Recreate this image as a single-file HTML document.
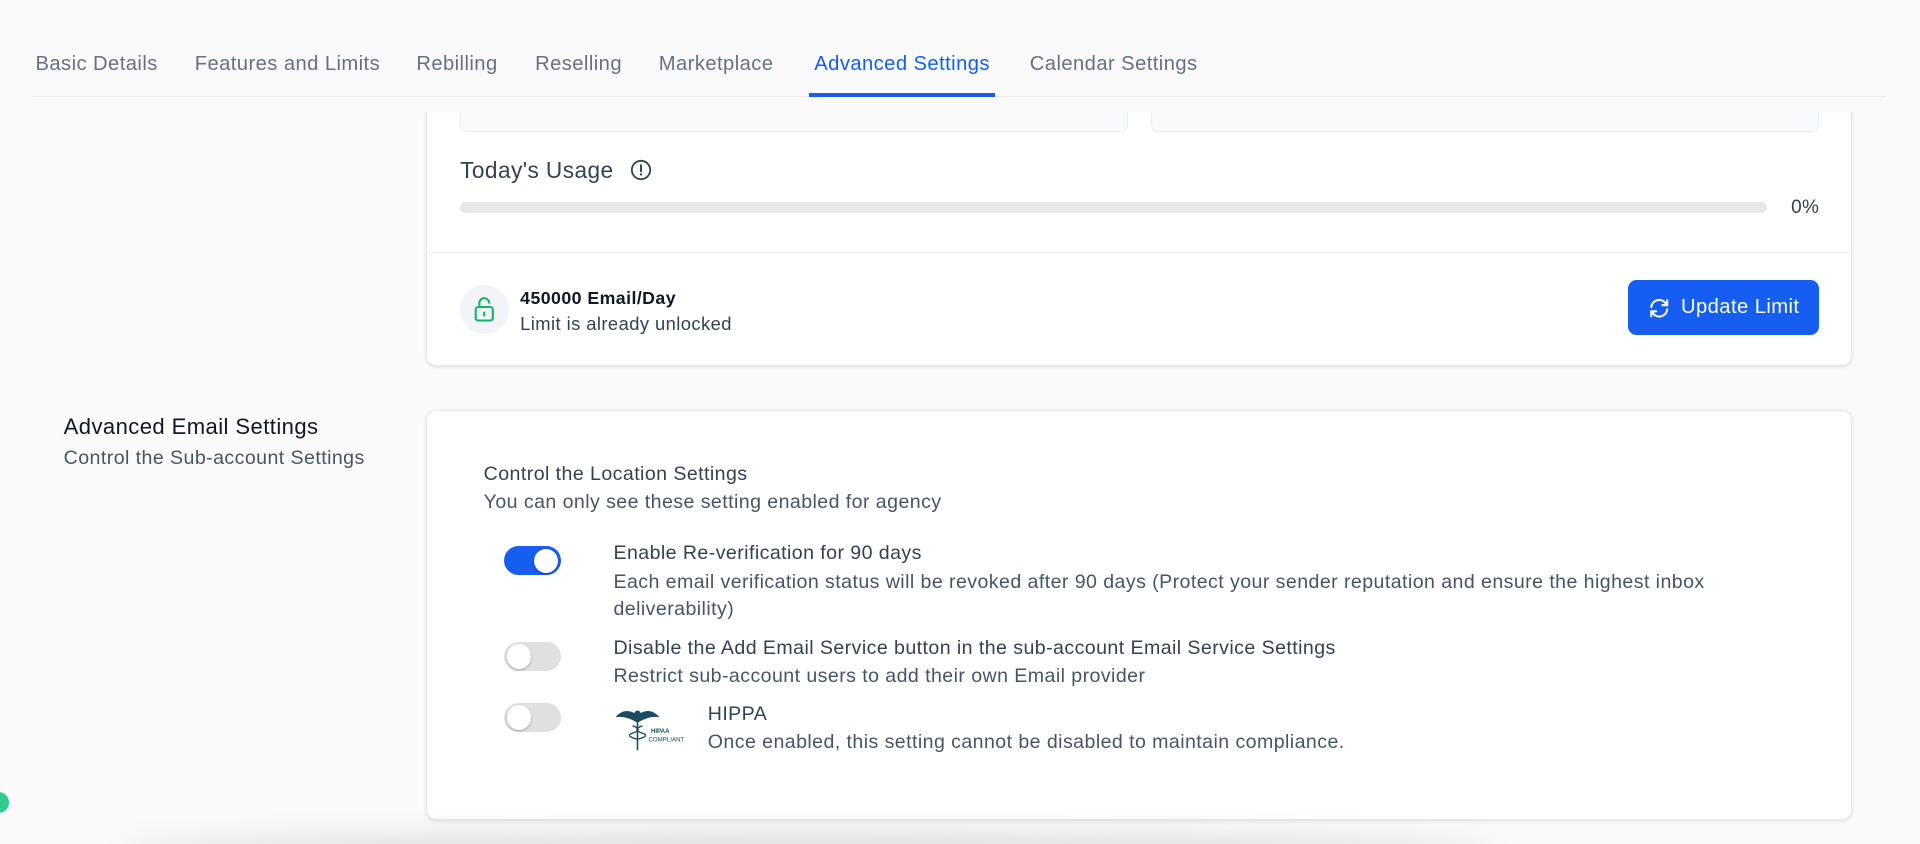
<!DOCTYPE html>
<html><head><meta charset="utf-8"><style>
html,body{margin:0;padding:0;width:1920px;height:844px;overflow:hidden;background:#fafafb;font-family:"Liberation Sans",Arial,sans-serif;}
#w{position:relative;width:1568px;height:689px;zoom:1.2244898;color:#344054;letter-spacing:.35px;}
.a{position:absolute;white-space:nowrap;}
.tab{top:43px;font-size:16.5px;color:#667085;}
.card{position:absolute;background:#fff;border:1px solid #e4e7ec;border-radius:8px;box-shadow:0 1px 3px rgba(16,24,40,.1);}
.tg{position:absolute;left:412px;width:46px;height:24px;border-radius:12px;background:#e0e0e0;}
.tg::after{content:"";position:absolute;top:2px;left:2px;width:20px;height:20px;border-radius:50%;background:#fff;box-shadow:0 1px 2px rgba(0,0,0,.25);}
.tg.on{background:#155eef;}
.tg.on::after{left:24px;}
.t{font-size:16px;color:#344054;font-weight:500;}
.d{font-size:16px;color:#475467;}
</style></head><body><div id="w">
<div class="a tab" style="left:29px">Basic Details</div>
<div class="a tab" style="left:159px">Features and Limits</div>
<div class="a tab" style="left:340px">Rebilling</div>
<div class="a tab" style="left:437px">Reselling</div>
<div class="a tab" style="left:538px">Marketplace</div>
<div class="a tab" style="left:665px;color:#155eef">Advanced Settings</div>
<div class="a tab" style="left:841px">Calendar Settings</div>
<div class="a" style="left:25px;top:78px;width:1515px;height:1px;background:#eaecf0"></div>
<div class="a" style="left:661px;top:76px;width:152px;height:3px;background:#155eef"></div>

<div class="card" style="left:348px;top:60px;width:1163px;height:237px;clip-path:inset(32px -10px -10px -10px)">
  <div style="position:absolute;left:27px;top:0;width:544px;height:45px;background:#f9fafb;border:1px solid #eaecf0;border-radius:6px"></div>
  <div style="position:absolute;left:591px;top:0;width:544px;height:45px;background:#f9fafb;border:1px solid #eaecf0;border-radius:6px"></div>
  <div class="a" style="left:27px;top:67px;font-size:18.5px;color:#344054">Today's Usage</div>
  <svg class="a" style="left:166px;top:69px" width="18" height="18" viewBox="0 0 18 18"><circle cx="9" cy="9" r="7.5" fill="none" stroke="#344054" stroke-width="1.5"/><path d="M9 5v5" stroke="#344054" stroke-width="1.6" stroke-linecap="round"/><circle cx="9" cy="12.6" r="1" fill="#344054"/></svg>
  <div class="a" style="left:27px;top:104px;width:1067px;height:9px;border-radius:5px;background:#e8e8e8"></div>
  <div class="a" style="right:26px;top:100px;font-size:15.5px;color:#344054">0%</div>
  <div class="a" style="left:0;top:145px;width:1163px;height:1px;background:#eaecf0"></div>
  <div class="a" style="left:27px;top:172px;width:40px;height:40px;border-radius:50%;background:#f2f4f7"></div>
  <svg class="a" style="left:37px;top:181px" width="20" height="22" viewBox="0 0 20 22"><rect x="3" y="9" width="14" height="11" rx="2" fill="none" stroke="#17b26a" stroke-width="1.7"/><path d="M6 9V6a4 4 0 0 1 8-0.5" fill="none" stroke="#17b26a" stroke-width="1.7" stroke-linecap="round"/><path d="M10 13.5v2.5" stroke="#17b26a" stroke-width="1.7" stroke-linecap="round"/></svg>
  <div class="a" style="left:76px;top:174px;font-size:14.5px;font-weight:bold;color:#101828">450000 Email/Day</div>
  <div class="a" style="left:76px;top:195px;font-size:15px;color:#344054">Limit is already unlocked</div>
  <div class="a" style="left:981px;top:168px;width:156px;height:45px;border-radius:7px;background:#155eef"></div>
  <svg class="a" style="left:996px;top:181px" width="20" height="20" viewBox="0 0 20 20" fill="none" stroke="#fff" stroke-width="1.7" stroke-linecap="round" stroke-linejoin="round"><path d="M3.5 9a6.5 6.5 0 0 1 11.6-3.2L16.5 7.5"/><path d="M16.5 3.5v4h-4"/><path d="M16.5 11a6.5 6.5 0 0 1-11.6 3.2L3.5 12.5"/><path d="M3.5 16.5v-4h4"/></svg>
  <div class="a" style="left:1024px;top:181px;font-size:16.5px;color:#fff">Update Limit</div>
</div>

<div class="a" style="left:52px;top:338px;font-size:18px;color:#101828">Advanced Email Settings</div>
<div class="a" style="left:52px;top:365px;font-size:16px;color:#475467">Control the Sub-account Settings</div>

<div class="card" style="left:348px;top:335px;width:1163px;height:333px"></div>
<div class="a t" style="left:395px;top:378px">Control the Location Settings</div>
<div class="a d" style="left:395px;top:401px">You can only see these setting enabled for agency</div>

<div class="tg on" style="top:446px"></div>
<div class="a t" style="left:501px;top:443px">Enable Re-verification for 90 days</div>
<div class="a d" style="left:501px;top:465px;line-height:22px;white-space:normal;width:930px">Each email verification status will be revoked after 90 days (Protect your sender reputation and ensure the highest inbox deliverability)</div>

<div class="tg" style="top:524px"></div>
<div class="a t" style="left:501px;top:520px">Disable the Add Email Service button in the sub-account Email Service Settings</div>
<div class="a d" style="left:501px;top:543px">Restrict sub-account users to add their own Email provider</div>

<div class="tg" style="top:574px"></div>
<svg class="a" style="left:501px;top:576px" width="70" height="38" viewBox="0 0 70 38"><path d="M2 10 C8 3 14 4 20 8 C26 4 32 3 38 10 C32 9 26 11 21 14 L19 14 C14 11 8 9 2 10Z" fill="#1d4a63"/><circle cx="20" cy="7" r="2.5" fill="#1d4a63"/><path d="M20 9V37" stroke="#1d4a63" stroke-width="1.3"/><path d="M16 17c6 2 6 4 0 6s-0 4 4 5M24 17c-6 2-6 4 0 6s0 4-4 5" stroke="#1d4a63" stroke-width="1.1" fill="none"/><text x="31" y="23" font-size="5" font-family="Liberation Sans" fill="#1d4a63" font-weight="bold" letter-spacing="0">HIPAA</text><text x="29" y="30" font-size="5" font-family="Liberation Sans" fill="#1d4a63" letter-spacing="0">COMPLIANT</text></svg>
<div class="a" style="left:578px;top:574px;font-size:16px;color:#344054">HIPPA</div>
<div class="a d" style="left:578px;top:597px">Once enabled, this setting cannot be disabled to maintain compliance.</div>

<div class="a" style="left:100px;top:682px;width:1120px;height:30px;border-radius:50%;background:rgba(0,0,0,.12);filter:blur(12px)"></div>
<div class="a" style="left:-10px;top:647px;width:17px;height:17px;border-radius:50%;background:#2ecc8f"></div>
</div></body></html>
